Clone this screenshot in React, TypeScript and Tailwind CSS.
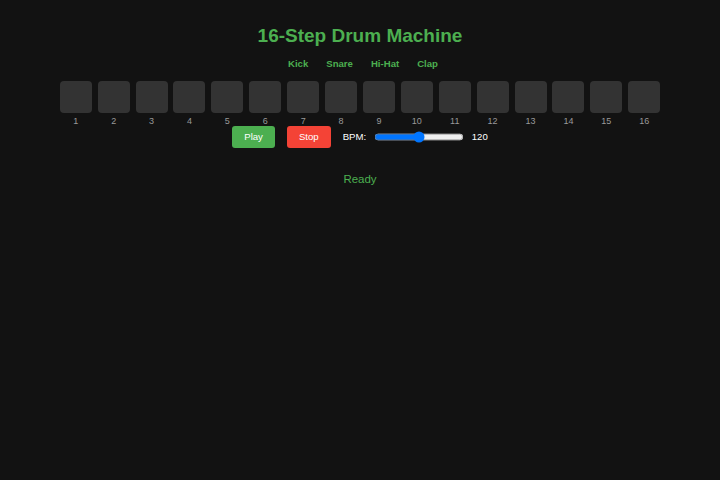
import React, { useState } from "react";

export default function App() {
  const [bpm, setBpm] = useState(120);
  const steps = Array.from({ length: 16 }, (_, i) => i + 1);
  return (
    <div className="w-[720px] h-[480px] bg-[#121212] flex flex-col items-center" style={{ fontFamily: '"Liberation Sans", Arial, sans-serif' }}>
      <h1 className="mt-[25px] h-[22px] leading-[22px] text-[19px] font-bold text-[#4caf50]">16-Step Drum Machine</h1>
      <div className="mt-[11px] h-[12px] leading-[12px] flex gap-[18px] pl-[6px] text-[9.6px] font-bold text-[#4caf50]">
        <span>Kick</span>
        <span>Snare</span>
        <span>Hi-Hat</span>
        <span>Clap</span>
      </div>
      <div className="mt-[11px] flex gap-[5.9px]">
        {steps.map((s) => (
          <div key={s} className="flex flex-col items-center w-[32px]">
            <div className="w-[32px] h-[32px] rounded-[4px] bg-[#333333]" />
            <div className="mt-[2px] h-[12px] leading-[12px] text-[9px] text-[#999999]">{s}</div>
          </div>
        ))}
      </div>
      <div className="mt-[-1px] flex items-center">
        <button className="h-[22px] px-[12px] rounded-[3px] bg-[#4caf50] text-white text-[9.6px]">Play</button>
        <button className="ml-[12px] h-[22px] px-[12px] rounded-[3px] bg-[#f44336] text-white text-[9.6px]">Stop</button>
        <span className="ml-[12px] text-white text-[9.6px]">BPM:</span>
        <input
          type="range"
          min={40}
          max={200}
          value={bpm}
          onChange={(e) => setBpm(Number(e.target.value))}
          className="ml-[10px] w-[112px] [zoom:0.8] accent-[#0075ff]"
        />
        <span className="ml-[8px] text-white text-[9.6px]">{bpm}</span>
      </div>
      <div className="mt-[24px] h-[14px] leading-[14px] text-[11.5px] text-[#4caf50]">Ready</div>
    </div>
  );
}
